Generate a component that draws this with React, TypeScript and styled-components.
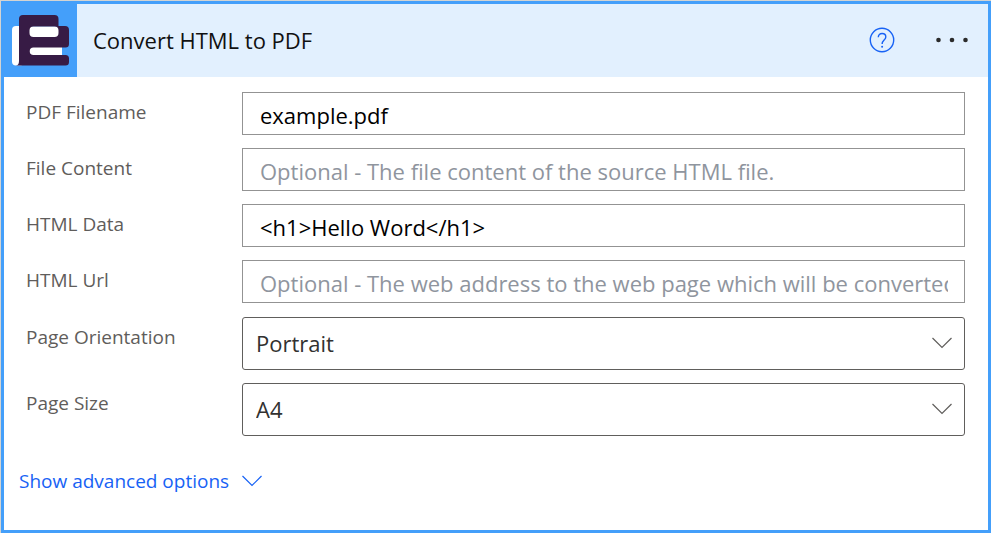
import React from "react";
import styled, { createGlobalStyle } from "styled-components";

const GlobalStyle = createGlobalStyle`
  * { box-sizing: border-box; }
  body {
    margin: 0;
    background: #d4d4d2;
    font-family: "Open Sans", "Noto Sans", sans-serif;
  }
`;

const Page = styled.div`
  padding: 1px 0 0 1px;
`;

const Card = styled.form`
  border: 3px solid #449ffa;
  background: #fff;
`;

const Header = styled.header`
  display: flex;
  align-items: center;
  height: 73px;
  padding-right: 15px;
  background: #e2f0fe;
`;

const Brand = styled.div`
  width: 73px;
  height: 73px;
  background: #449ffa;
`;

const Title = styled.h1`
  flex: 1;
  margin: 0;
  padding: 0 0 2px 16px;
  font-size: 22px;
  line-height: 28px;
  font-weight: 400;
  color: #111;
`;

const Actions = styled.div`
  display: flex;
  gap: 28px;
  padding-bottom: 2px;
`;

const IconButton = styled.button`
  display: flex;
  align-items: center;
  justify-content: center;
  width: 42px;
  height: 42px;
  padding: 0;
  border: 0;
  background: none;
  cursor: pointer;
`;

const Body = styled.div`
  display: grid;
  gap: 14px;
  padding: 15px 23px 0 22px;
`;

const Fields = styled.div`
  display: grid;
  gap: 13px;
`;

const Row = styled.div`
  display: grid;
  grid-template-columns: 216px 1fr;
  align-items: start;
`;

const Label = styled.label`
  padding-top: 7px;
  font-size: 19px;
  line-height: 26px;
  color: #5f5d5b;
`;

const TextInput = styled.input`
  width: 100%;
  height: 43px;
  padding: 2px 16px 0 17px;
  border: 1px solid #939393;
  border-radius: 0;
  background: #fff;
  font-family: inherit;
  font-size: 22px;
  color: #000;

  &::placeholder {
    color: #8f959e;
    opacity: 1;
  }
`;

const SelectBox = styled.div`
  position: relative;
`;

const Select = styled.select`
  display: block;
  width: 100%;
  height: 53px;
  padding: 0 48px 2px 13px;
  border: 1px solid #605e5c;
  border-radius: 3px;
  appearance: none;
  background: #fff;
  font-family: inherit;
  font-size: 22px;
  color: #323130;
`;

const SelectArrow = styled.span`
  position: absolute;
  top: 20px;
  right: 12px;
  display: flex;
  pointer-events: none;
`;

const Advanced = styled.button`
  display: flex;
  align-items: center;
  gap: 12px;
  margin: 31px 0 35px 15px;
  padding: 0;
  border: 0;
  background: none;
  font-family: inherit;
  font-size: 19px;
  line-height: 28px;
  color: #1762f5;
  cursor: pointer;
`;

const Chevron = ({ color }: { color: string }) => (
  <svg width="22" height="12" viewBox="0 0 22 12" fill="none" stroke={color} strokeWidth="1.2" aria-hidden="true">
    <path d="M1.5 1 L11 10.5 L20.5 1" />
  </svg>
);

const Logo = () => (
  <svg width="73" height="73" viewBox="4 4 73 73" role="img" aria-label="Encodian">
    <rect x="12" y="26" width="12" height="39.5" rx="4" fill="#fff" />
    <rect x="28" y="26.3" width="34" height="29.5" fill="#fff" />
    <path
      fill="#371b45"
      d="M23 15H54.5Q58.5 15 58.5 19V26H65Q69 26 69 30V44Q69 47.500 65.500 47.500H33.500A3.700 3.700 0 0 0 33.500 55H65.500Q69 55 69 58.500V62Q69 65.500 65.500 65.500H15.500Q19 65.500 19 61V19Q19 15 23 15ZM33.500 26.500Q29.500 26.500 29.500 30.500V33Q29.500 37 33.500 37H54.500Q58.500 37 58.500 33V30.500Q58.500 26.500 54.500 26.500Z"
    />
  </svg>
);

const Help = () => (
  <svg width="26" height="26" viewBox="0 0 26 26" fill="none" stroke="#1762f5" strokeWidth="1.4" aria-hidden="true">
    <circle cx="13" cy="13" r="11.7" />
    <path d="M9.300 10.200C9.300 7.900 10.900 6.500 13.100 6.500C15.300 6.500 16.800 7.800 16.800 9.900C16.800 12.900 13.100 13.200 13.100 17" />
    <circle cx="13.1" cy="19.800" r="1" fill="#1762f5" stroke="none" />
  </svg>
);

const Dots = () => (
  <svg width="34" height="6" viewBox="0 0 34 6" fill="#2b2b2b" aria-hidden="true">
    <circle cx="3.500" cy="3" r="2.300" />
    <circle cx="17" cy="3" r="2.300" />
    <circle cx="30.500" cy="3" r="2.300" />
  </svg>
);

const textFields = [
  { id: "filename", label: "PDF Filename", value: "example.pdf" },
  { id: "content", label: "File Content", placeholder: "Optional - The file content of the source HTML file." },
  { id: "data", label: "HTML Data", value: "<h1>Hello Word</h1>" },
  {
    id: "url",
    label: "HTML Url",
    placeholder: "Optional - The web address to the web page which will be converted to PDF.",
  },
];

const selectFields = [
  { id: "orientation", label: "Page Orientation", options: ["Portrait", "Landscape"] },
  { id: "size", label: "Page Size", options: ["A4", "A3", "Letter"] },
];

export default function App() {
  return (
    <Page>
      <GlobalStyle />
      <Card>
        <Header>
          <Brand>
            <Logo />
          </Brand>
          <Title>Convert HTML to PDF</Title>
          <Actions>
            <IconButton type="button" aria-label="Help">
              <Help />
            </IconButton>
            <IconButton type="button" aria-label="More options">
              <Dots />
            </IconButton>
          </Actions>
        </Header>
        <Body>
          <Fields>
            {textFields.map((f) => (
              <Row key={f.id}>
                <Label htmlFor={f.id}>{f.label}</Label>
                <TextInput id={f.id} type="text" defaultValue={f.value} placeholder={f.placeholder} />
              </Row>
            ))}
          </Fields>
          <Fields>
            {selectFields.map((f) => (
              <Row key={f.id}>
                <Label htmlFor={f.id}>{f.label}</Label>
                <SelectBox>
                  <Select id={f.id}>
                    {f.options.map((o) => (
                      <option key={o}>{o}</option>
                    ))}
                  </Select>
                  <SelectArrow>
                    <Chevron color="#605e5c" />
                  </SelectArrow>
                </SelectBox>
              </Row>
            ))}
          </Fields>
        </Body>
        <Advanced type="button">
          Show advanced options
          <Chevron color="#1762f5" />
        </Advanced>
      </Card>
    </Page>
  );
}
